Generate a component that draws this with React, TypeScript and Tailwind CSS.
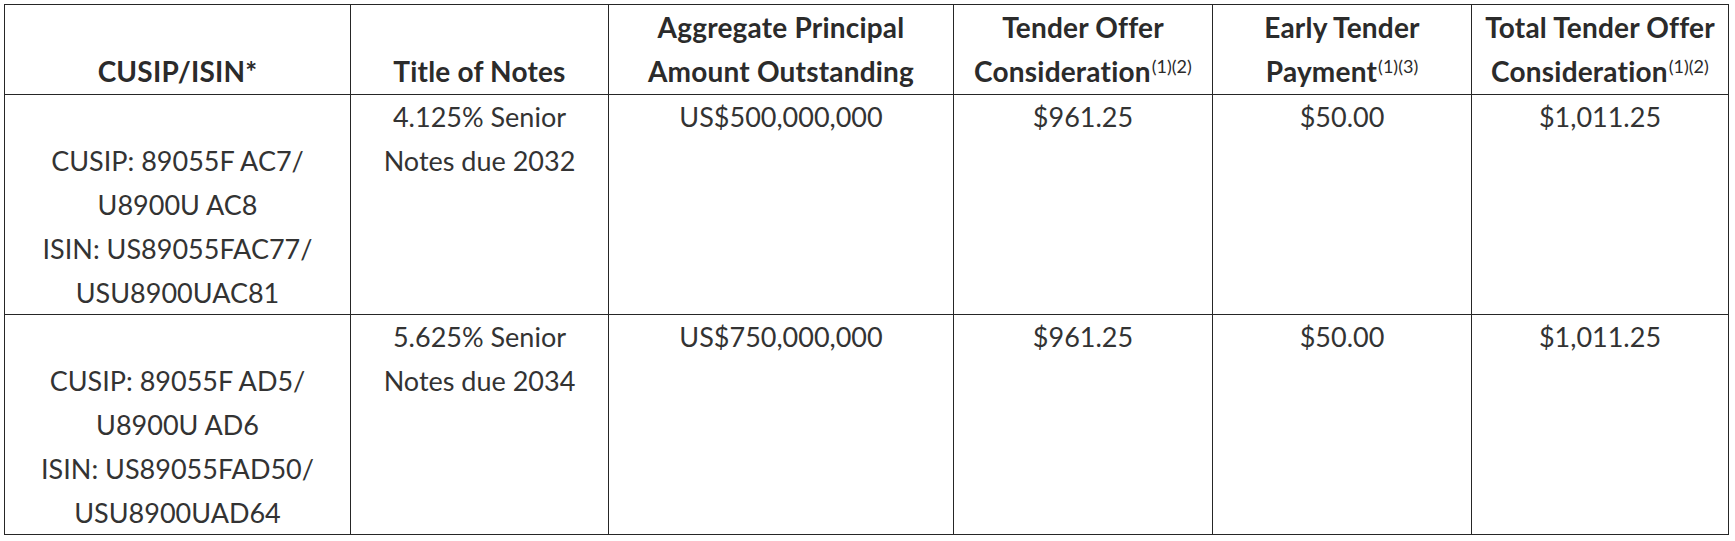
const header = [
  { lines: ["", "CUSIP/ISIN*"] },
  { lines: ["", "Title of Notes"] },
  { lines: ["Aggregate Principal", "Amount Outstanding"] },
  { lines: ["Tender Offer", "Consideration"], sup: "(1)(2)" },
  { lines: ["Early Tender", "Payment"], sup: "(1)(3)" },
  { lines: ["Total Tender Offer", "Consideration"], sup: "(1)(2)" },
];

const rows = [
  {
    ids: ["CUSIP: 89055F AC7/", "U8900U AC8", "ISIN: US89055FAC77/", "USU8900UAC81"],
    title: ["4.125% Senior", "Notes due 2032"],
    amount: "US$500,000,000",
    tender: "$961.25",
    early: "$50.00",
    total: "$1,011.25",
  },
  {
    ids: ["CUSIP: 89055F AD5/", "U8900U AD6", "ISIN: US89055FAD50/", "USU8900UAD64"],
    title: ["5.625% Senior", "Notes due 2034"],
    amount: "US$750,000,000",
    tender: "$961.25",
    early: "$50.00",
    total: "$1,011.25",
  },
];

const cell = "border-r border-b border-[#262626] text-center";

export default function App() {
  return (
    <div className="min-h-screen bg-white p-1" style={{ fontFamily: "Lato, 'Open Sans', sans-serif" }}>
      <div className="grid w-[1725px] grid-cols-[346px_258px_345px_259px_259px_257px] border-l border-t border-[#262626] text-[#333] leading-[44px]">
        {header.map((h, i) => (
          <div key={i} className={`${cell} h-[90px] whitespace-nowrap text-[28px] font-bold tracking-[0.2px] text-[#2b2b2b]`}>
            <div className="h-[44px]">{h.lines[0]}</div>
            <div className="h-[44px]">
              {h.lines[1]}
              {h.sup && (
                <span className="relative -top-[9px] ml-[1px] text-[18px] font-normal tracking-normal">{h.sup}</span>
              )}
            </div>
          </div>
        ))}

        {rows.map((r, i) => (
          <div key={i} className="contents">
            <div className={`${cell} h-[220px] whitespace-nowrap text-[27px]`}>
              <div className="h-[44px]" />
              {r.ids.map((l) => (
                <div key={l} className="h-[44px]">{l}</div>
              ))}
            </div>
            <div className={`${cell} h-[220px] whitespace-nowrap text-[27px]`}>
              {r.title.map((l) => (
                <div key={l} className="h-[44px]">{l}</div>
              ))}
            </div>
            <div className={`${cell} h-[220px] text-[27px]`}>{r.amount}</div>
            <div className={`${cell} h-[220px] text-[27px]`}>{r.tender}</div>
            <div className={`${cell} h-[220px] text-[27px]`}>{r.early}</div>
            <div className={`${cell} h-[220px] text-[27px]`}>{r.total}</div>
          </div>
        ))}
      </div>
    </div>
  );
}
